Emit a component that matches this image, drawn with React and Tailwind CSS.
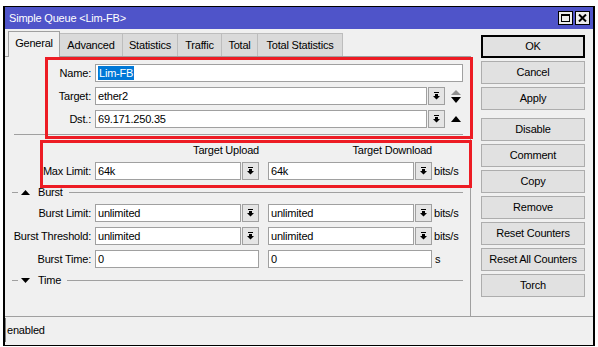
import React from 'react';

const tabs = [
  { name: 'General', w: 'w-[52px]', active: true },
  { name: 'Advanced', w: 'w-[63px]' },
  { name: 'Statistics', w: 'w-[55px]' },
  { name: 'Traffic', w: 'w-[44px]' },
  { name: 'Total', w: 'w-[36px]' },
  { name: 'Total Statistics', w: 'w-[85px]' },
];

const buttons = [
  { name: 'OK', def: true },
  { name: 'Cancel' },
  { name: 'Apply', gap: true },
  { name: 'Disable' },
  { name: 'Comment' },
  { name: 'Copy' },
  { name: 'Remove' },
  { name: 'Reset Counters' },
  { name: 'Reset All Counters' },
  { name: 'Torch' },
];

function DropArrow() {
  return (
    <svg width="7" height="8" viewBox="0 0 7 8">
      <rect x="1" y="0" width="5" height="1" fill="#000" />
      <path d="M2 2h3v2h2L3.5 7.5 0 4h2z" fill="#000" />
    </svg>
  );
}

function Field({ className = '', children }) {
  return (
    <div className={`h-[18px] shrink-0 bg-white border border-[#a0a0a0] flex items-center pl-[2px] overflow-hidden whitespace-nowrap ${className}`}>
      {children}
    </div>
  );
}

function Combo({ w, value }) {
  return (
    <div className="flex shrink-0">
      <Field className={w}>{value}</Field>
      <div className="ml-[1px] w-[17px] h-[18px] bg-[#e5e5e5] border border-[#a0a0a0] flex items-center justify-center">
        <DropArrow />
      </div>
    </div>
  );
}

function Label({ children }) {
  return <div className="w-[86px] shrink-0 text-right">{children}</div>;
}

function GroupLine({ label, open }) {
  return (
    <div className="flex items-center h-[10px] w-[458px]">
      <div className="ml-[7px] w-[6px] h-px bg-[#a0a0a0]" />
      <svg className="ml-[3px]" width="9" height="5" viewBox="0 0 9 5">
        {open ? <path d="M0 0h9L4.5 5z" fill="#000" /> : <path d="M4.5 0L9 5H0z" fill="#000" />}
      </svg>
      <div className="ml-[8px] leading-none">{label}</div>
      <div className="ml-[6px] flex-1 h-px bg-[#a0a0a0]" />
    </div>
  );
}

export default function App() {
  return (
    <div className="relative w-[598px] h-[347px] bg-white overflow-hidden font-['Liberation_Sans',Arial,sans-serif] text-[11px] tracking-[-0.2px] text-black">
      <div className="ml-[3px] mt-[6px] w-[592px] h-[340px] border-t border-b border-l-2 border-r-2 border-black flex flex-col bg-[#f0f0f0]">
        {/* title bar */}
        <div className="h-[22px] shrink-0 bg-[#4f54c9] flex items-center pl-[4px] pr-[3px] text-white">
          <div className="flex-1">Simple Queue &lt;Lim-FB&gt;</div>
          <div className="w-[15px] h-[14px] bg-[#ececec] border border-black flex items-center justify-center">
            <div className="w-[9px] h-[8px] border border-black border-t-2" />
          </div>
          <div className="ml-[2px] w-[15px] h-[14px] bg-[#ececec] border border-black flex items-center justify-center">
            <svg width="9" height="8" viewBox="0 0 9 8">
              <path d="M1 0.5L8 7.5M8 0.5L1 7.5" stroke="#000" strokeWidth="2" />
            </svg>
          </div>
        </div>

        {/* main */}
        <div className="flex h-[287px] shrink-0">
          <div className="w-[466px] flex flex-col">
            <div className="h-[27px] flex items-end pl-[3px]">
              {tabs.map((t) =>
                t.active ? (
                  <div
                    key={t.name}
                    className={`${t.w} h-[26px] -mb-px relative z-10 bg-[#f0f0f0] border border-b-0 border-[#a0a0a0] flex items-center justify-center pb-[2px]`}
                  >
                    {t.name}
                  </div>
                ) : (
                  <div
                    key={t.name}
                    className={`${t.w} h-[23px] bg-[#dadada] border border-l-0 border-b-0 border-[#bdbdbd] flex items-center justify-center`}
                  >
                    {t.name}
                  </div>
                )
              )}
            </div>
            <div className="h-[260px] border-t border-r border-[#a0a0a0] pt-[7px]">
              <div className="flex items-center h-[18px]">
                <Label>Name:</Label>
                <Field className="ml-[4px] w-[368px] pl-[1px]">
                  <span className="bg-[#0078d7] text-white px-[1px] leading-[14px]">Lim-FB</span>
                </Field>
              </div>
              <div className="flex items-center h-[18px] mt-[5px]">
                <Label>Target:</Label>
                <div className="ml-[4px]">
                  <Combo w="w-[332px]" value="ether2" />
                </div>
                <svg className="ml-[6px]" width="10" height="13" viewBox="0 0 10 13">
                  <path d="M5 0L10 5H0z" fill="#909090" />
                  <path d="M0 7h10L5 13z" fill="#000" />
                </svg>
              </div>
              <div className="flex items-center h-[18px] mt-[5px]">
                <Label>Dst.:</Label>
                <div className="ml-[4px]">
                  <Combo w="w-[332px]" value="69.171.250.35" />
                </div>
                <svg className="ml-[6px]" width="10" height="6" viewBox="0 0 10 6">
                  <path d="M5 0L10 6H0z" fill="#000" />
                </svg>
              </div>
              <div className="mt-[6px] ml-[9px] w-[449px] h-px bg-[#a0a0a0]" />

              <div className="mt-[8px] h-[14px] flex items-center">
                <div className="w-[254px] text-right">Target Upload</div>
                <div className="w-[173px] text-right">Target Download</div>
              </div>
              <div className="flex items-center h-[18px] mt-[5px]">
                <Label>Max Limit:</Label>
                <div className="ml-[4px]">
                  <Combo w="w-[146px]" value="64k" />
                </div>
                <div className="ml-[9px]">
                  <Combo w="w-[146px]" value="64k" />
                </div>
                <div className="ml-[2px]">bits/s</div>
              </div>

              <div className="mt-[7px]">
                <GroupLine label="Burst" />
              </div>
              <div className="flex items-center h-[18px] mt-[7px]">
                <Label>Burst Limit:</Label>
                <div className="ml-[4px]">
                  <Combo w="w-[146px]" value="unlimited" />
                </div>
                <div className="ml-[9px]">
                  <Combo w="w-[146px]" value="unlimited" />
                </div>
                <div className="ml-[2px]">bits/s</div>
              </div>
              <div className="flex items-center h-[18px] mt-[5px]">
                <Label>Burst Threshold:</Label>
                <div className="ml-[4px]">
                  <Combo w="w-[146px]" value="unlimited" />
                </div>
                <div className="ml-[9px]">
                  <Combo w="w-[146px]" value="unlimited" />
                </div>
                <div className="ml-[2px]">bits/s</div>
              </div>
              <div className="flex items-center h-[18px] mt-[5px]">
                <Label>Burst Time:</Label>
                <Field className="ml-[4px] w-[164px]">0</Field>
                <Field className="ml-[9px] w-[164px]">0</Field>
                <div className="ml-[3px]">s</div>
              </div>
              <div className="mt-[7px]">
                <GroupLine label="Time" open />
              </div>
            </div>
          </div>

          <div className="pl-[10px] pt-[6px] flex flex-col">
            {buttons.map((b) => (
              <div
                key={b.name}
                className={`w-[104px] h-[23px] shrink-0 flex items-center justify-center bg-[#e1e1e1] ${
                  b.def ? 'border-2 border-black' : 'border border-[#adadad]'
                } ${b.gap ? 'mb-[8px]' : 'mb-[3px]'}`}
              >
                {b.name}
              </div>
            ))}
          </div>
        </div>

        {/* status bar */}
        <div className="flex-1 border-t border-[#a0a0a0] pt-[1px]">
          <div className="h-[24px] border-l border-[#808080] flex items-center pl-[1px]">enabled</div>
        </div>
      </div>

      {/* annotation boxes */}
      <div className="absolute left-[45px] top-[57px] w-[428px] h-[82px] border-[3px] border-[#ed1c24]" />
      <div className="absolute left-[40px] top-[140px] w-[432px] h-[48px] border-[3px] border-[#ed1c24]" />
    </div>
  );
}
